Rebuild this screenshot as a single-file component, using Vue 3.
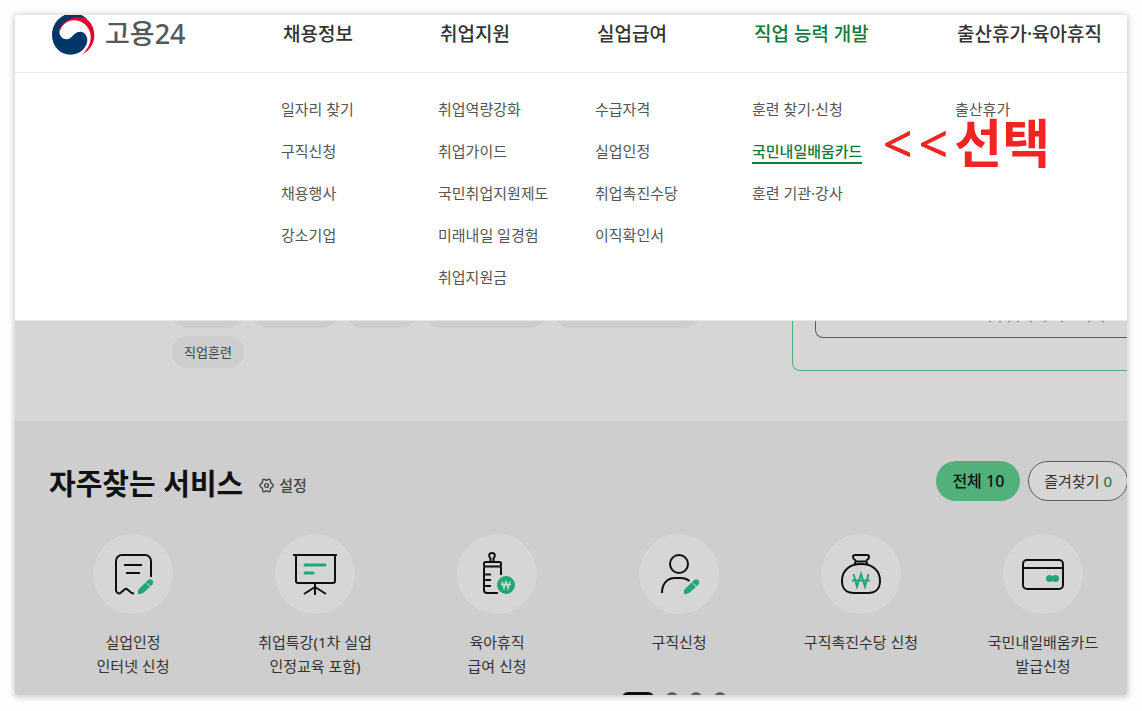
<script setup>
const menus = [
  { title: '채용정보', items: ['일자리 찾기', '구직신청', '채용행사', '강소기업'] },
  { title: '취업지원', items: ['취업역량강화', '취업가이드', '국민취업지원제도', '미래내일 일경험', '취업지원금'] },
  { title: '실업급여', items: ['수급자격', '실업인정', '취업촉진수당', '이직확인서'] },
  { title: '직업 능력 개발', active: true, items: ['훈련 찾기·신청', '국민내일배움카드', '훈련 기관·강사'] },
  { title: '출산휴가·육아휴직', items: ['출산휴가'] },
]
const selected = '국민내일배움카드'
const tagWidths = [72, 86, 71, 121, 146]
const services = [
  { icon: 'receipt', lines: ['실업인정', '인터넷 신청'] },
  { icon: 'board', lines: ['취업특강(1차 실업', '인정교육 포함)'] },
  { icon: 'bottle', lines: ['육아휴직', '급여 신청'] },
  { icon: 'person', lines: ['구직신청'] },
  { icon: 'bag', lines: ['구직촉진수당 신청'] },
  { icon: 'card', lines: ['국민내일배움카드', '발급신청'] },
]
</script>

<template>
  <div class="page">
    <header class="header">
      <a class="logo" href="#">
        <svg width="43" height="42" viewBox="156 39 129 126" aria-hidden="true">
          <path fill="#e6002d" d="M178 98C176 66 198 46 226 46C260 47 283 72 283 106C283 132 268 153 246 164C263 148 273 130 272 108C270 82 250 61 222 61C200 61 184 76 178 98Z" />
          <path fill="#003668" d="M262 58C244 49 222 49 205 59C188 68 177 82 178 96C179 110 190 120 204 117C218 113 222 95 241 95C254 96 262 107 262 121C261 145 238 164 212 164C180 164 156 139 156 105C156 68 184 40 219 40C236 40 252 47 262 58Z" />
        </svg>
        <span>고용24</span>
      </a>
      <nav class="nav">
        <a v-for="m in menus" :key="m.title" href="#" :class="{ on: m.active }">{{ m.title }}</a>
      </nav>
    </header>

    <section class="mega">
      <ul v-for="m in menus" :key="m.title">
        <li v-for="item in m.items" :key="item">
          <a href="#" :class="{ picked: item === selected }">{{ item }}</a>
        </li>
      </ul>
      <p class="note"><span>&lt;</span><span>&lt;</span><strong>선택</strong></p>
    </section>

    <section class="search">
      <div class="tags">
        <div class="row">
          <span v-for="(w, i) in tagWidths" :key="i" class="tag" :style="{ width: w + 'px' }"></span>
        </div>
        <div class="row"><a class="tag" href="#">직업훈련</a></div>
      </div>
      <div class="login">
        <div class="login-inner">
          <svg width="120" height="2" viewBox="0 0 120 2" aria-hidden="true">
            <path stroke="#777" stroke-width="1" d="M0 .5h2M10 .5h2M19 .5h2M28 .5h2M41 .5h2M55 .5h2M72 .5h2M99 .5h2M113 .5h2" />
          </svg>
        </div>
      </div>
    </section>

    <main class="services">
      <div class="head">
        <h2>자주찾는 서비스</h2>
        <button class="setting" type="button">
          <svg width="15" height="15" viewBox="0 0 15 15" fill="none" stroke="#444" stroke-width="1.4" stroke-linejoin="round" aria-hidden="true">
            <path d="M4.300 1.300C5.500.5 6.200 2.200 7.500 2.200S9.500.5 10.700 1.300C12 2 11 3.300 11.700 4.700C12.400 5.800 14.200 5.800 14.200 7.500S12.400 9.200 11.700 10.300C11 11.700 12 13 10.700 13.700C9.500 14.500 8.800 12.800 7.500 12.800S5.500 14.500 4.300 13.700C3 13 4 11.700 3.300 10.300C2.600 9.200.8 9.200.8 7.500S2.600 5.800 3.300 4.700C4 3.300 3 2 4.300 1.300Z" />
            <circle cx="7.500" cy="7.500" r="1.900" />
          </svg>
          설정
        </button>
        <div class="tabs">
          <button class="tab all" type="button">전체 10</button>
          <button class="tab fav" type="button">즐겨찾기 <em>0</em></button>
        </div>
      </div>

      <ul class="list">
        <li v-for="s in services" :key="s.icon">
          <a href="#">
            <span class="circle">
              <svg width="80" height="80" viewBox="0 0 80 80" fill="none" stroke="#0f0f0f" stroke-width="2" aria-hidden="true">
                <template v-if="s.icon === 'receipt'">
                  <path d="M58 43V27a6 6 0 0 0-6-6H29a6 6 0 0 0-6 6v29c0 3 3 4.500 5 2.500l3.500-3c1-1 2-1 3 0l3.500 3c1 .8 1.800 1 3 1M31 31h18M33 39h14" />
                  <g fill="#1fa874" stroke="none">
                    <path d="M45 60v-4l7.500-7.500 4.500 4.500L50 59Q47 60.500 45 60Z" />
                    <path d="M54 47q2.500-3 5-1t0 5l-1.200 1.200-5-4Z" />
                  </g>
                </template>
                <template v-else-if="s.icon === 'board'">
                  <path d="M18 21h44M21 21v26q0 2 2 2h35q2 0 2-2V21M40 49v12M40 53l-11 7M40 53l11 7" />
                  <path stroke="#1fa874" stroke-width="3" stroke-linecap="round" d="M30 31h20M30 39h8" />
                </template>
                <template v-else-if="s.icon === 'bottle'">
                  <path d="M33.500 28v-3.500c-2-1.500-2-5.500 1.500-5.500s3.500 4 1.500 5.500V28" />
                  <rect x="27" y="28" width="17" height="4.500" rx="1.500" />
                  <path d="M27 33v23q0 3 3 3H41M44 33v8M28 40.500h6M28 46h6M28 52h6" />
                  <circle cx="49" cy="51" r="9" fill="#1fa874" stroke="none" />
                  <path stroke="#c6ded5" stroke-width="1.300" d="M45 47.500l2 7 2-7 2 7 2-7M44 50.500h10" />
                </template>
                <template v-else-if="s.icon === 'person'">
                  <circle cx="40" cy="30" r="9" />
                  <path d="M23 59C23 50 28 44 36 44h6c3 0 6 1 8.500 3" />
                  <g fill="#1fa874" stroke="none">
                    <path d="M45 60v-4l7.500-7.500 4.500 4.500L50 59Q47 60.500 45 60Z" />
                    <path d="M54 47q2.500-3 5-1t0 5l-1.200 1.200-5-4Z" />
                  </g>
                </template>
                <template v-else-if="s.icon === 'bag'">
                  <path d="M34 21h12q2 0 2 2t-2 3l-1 1.500H35L34 26q-2-1-2-3t2-2ZM34 28v2.500M46 28v2.500" />
                  <path d="M40 30c12 0 19 7 19 17 0 8-5 12-12 12H33c-7 0-12-4-12-12 0-10 7-17 19-17Z" />
                  <path stroke="#1fa874" d="M32.500 40l3.500 12.500L40 40l4 12.500L47.500 40M31 46.500h18" />
                </template>
                <template v-else>
                  <rect x="20" y="26" width="40" height="29" rx="4" />
                  <path d="M20 34h40" />
                  <g fill="#1fa874" stroke="none"><circle cx="46.500" cy="44.500" r="3.500" /><circle cx="52.500" cy="44.500" r="3.500" /></g>
                </template>
              </svg>
            </span>
            <span v-for="line in s.lines" :key="line" class="line">{{ line }}</span>
          </a>
        </li>
      </ul>

      <div class="pager">
        <button class="dot current" type="button" aria-label="1"></button>
        <button v-for="n in 3" :key="n" class="dot" type="button" :aria-label="String(n + 1)"></button>
      </div>
    </main>
  </div>
</template>

<style>
body {
  margin: 0;
  background: #fefefe;
}
</style>

<style scoped>
.page {
  box-sizing: border-box;
  height: calc(100vh - 31px);
  margin: 15px 15px 16px;
  overflow: hidden;
  border-radius: 2px;
  background: #fff;
  box-shadow: 0 1px 6px 1px rgba(0, 0, 0, 0.22);
  font-family: "Noto Sans", "Noto Sans CJK KR", sans-serif;
  font-size: 15px;
  line-height: 24px;
  color: #333;
}
a {
  color: inherit;
  text-decoration: none;
}
ul {
  list-style: none;
  margin: 0;
  padding: 0;
}
button {
  font: inherit;
  color: inherit;
  padding: 0;
  border: 0;
  background: none;
}
.header {
  display: flex;
  align-items: center;
  height: 38px;
  padding-bottom: 19px;
  border-bottom: 1px solid #ebebeb;
}
.logo {
  box-sizing: border-box;
  flex: 0 0 268px;
  display: flex;
  align-items: center;
  gap: 10px;
  padding-left: 37px;
  font-size: 27px;
  font-weight: 500;
  color: #595757;
}
.logo svg {
  flex: none;
}
.nav {
  flex: 1;
  display: grid;
  grid-template-columns: 157fr 157fr 157fr 203fr 170fr;
  font-size: 19px;
  font-weight: 500;
  white-space: nowrap;
}
.nav .on {
  color: #137a3e;
}
.mega {
  position: relative;
  display: grid;
  grid-template-columns: 157fr 157fr 157fr 203fr 172fr;
  padding: 15px 0 22px 266px;
  border-bottom: 1px solid #e6e6e6;
  color: #555;
}
.mega li {
  height: 42px;
  line-height: 42px;
  white-space: nowrap;
}
.mega .picked {
  padding-bottom: 1px;
  border-bottom: 2px solid #137a3e;
  font-weight: 500;
  color: #137a3e;
}
.note {
  position: absolute;
  top: 42px;
  right: 77px;
  display: flex;
  gap: 6px;
  margin: 0;
  font-size: 52px;
  line-height: 56px;
  font-weight: 500;
  color: #f12424;
}
.note strong {
  font-weight: 700;
}
.search {
  display: flex;
  align-items: flex-end;
  height: 100px;
  overflow: hidden;
  background: #d6d6d6;
}
.tags {
  flex: 1;
  display: flex;
  flex-direction: column;
  gap: 8px;
  padding: 0 0 53px 157px;
}
.row {
  display: flex;
  gap: 8px;
}
.tag {
  box-sizing: border-box;
  height: 32px;
  padding: 0 12px;
  border-radius: 16px;
  background: #cdcdcd;
  font-size: 13px;
  line-height: 32px;
  color: #444;
}
.login {
  box-sizing: border-box;
  flex: 0 0 335px;
  height: 80px;
  margin-bottom: 50px;
  padding: 0 0 32px 22px;
  border: solid #4fb077;
  border-width: 0 0 1px 1px;
  border-bottom-left-radius: 8px;
}
.login-inner {
  box-sizing: border-box;
  height: 100%;
  padding: 30px 0 0 173px;
  border: solid #5c5c5c;
  border-width: 0 0 1px 1px;
  border-bottom-left-radius: 8px;
}
.login-inner svg {
  display: block;
}
.services {
  min-height: 100%;
  padding-top: 40px;
  background: #cecece;
}
.head {
  display: flex;
  align-items: center;
  height: 40px;
  padding-left: 34px;
}
h2 {
  margin: 6px 0 0;
  font-size: 29px;
  line-height: 40px;
  font-weight: 700;
  color: #111;
}
.setting {
  display: flex;
  align-items: center;
  gap: 5px;
  margin: 8px 0 0 16px;
  font-weight: 500;
  color: #444;
}
.tabs {
  display: flex;
  gap: 8px;
  margin: 0 -1px 0 auto;
}
.tab {
  box-sizing: border-box;
  height: 40px;
  padding: 0 15px;
  border-radius: 20px;
  white-space: nowrap;
}
.all {
  padding: 0 16px;
  background: #52b07a;
  font-size: 16px;
  font-weight: 500;
  color: #111;
}
.fav {
  border: 1px solid #5c5c5c;
  background: #d6d6d6;
}
.fav em {
  font-style: normal;
  color: #106d38;
}
.list {
  display: grid;
  grid-template-columns: repeat(6, 1fr);
  margin: 33px -7px 0 27px;
}
.list a {
  display: flex;
  flex-direction: column;
  align-items: center;
}
.circle {
  width: 80px;
  height: 80px;
  margin-bottom: 16px;
  border-radius: 50%;
  background: #d6d6d6;
}
.line {
  white-space: nowrap;
}
.pager {
  display: flex;
  gap: 12px;
  margin-top: 14px;
  padding-left: 607px;
}
.dot {
  width: 12px;
  height: 12px;
  border-radius: 6px;
  background: #636363;
}
.current {
  width: 32px;
  background: #0f0f0f;
}
</style>
